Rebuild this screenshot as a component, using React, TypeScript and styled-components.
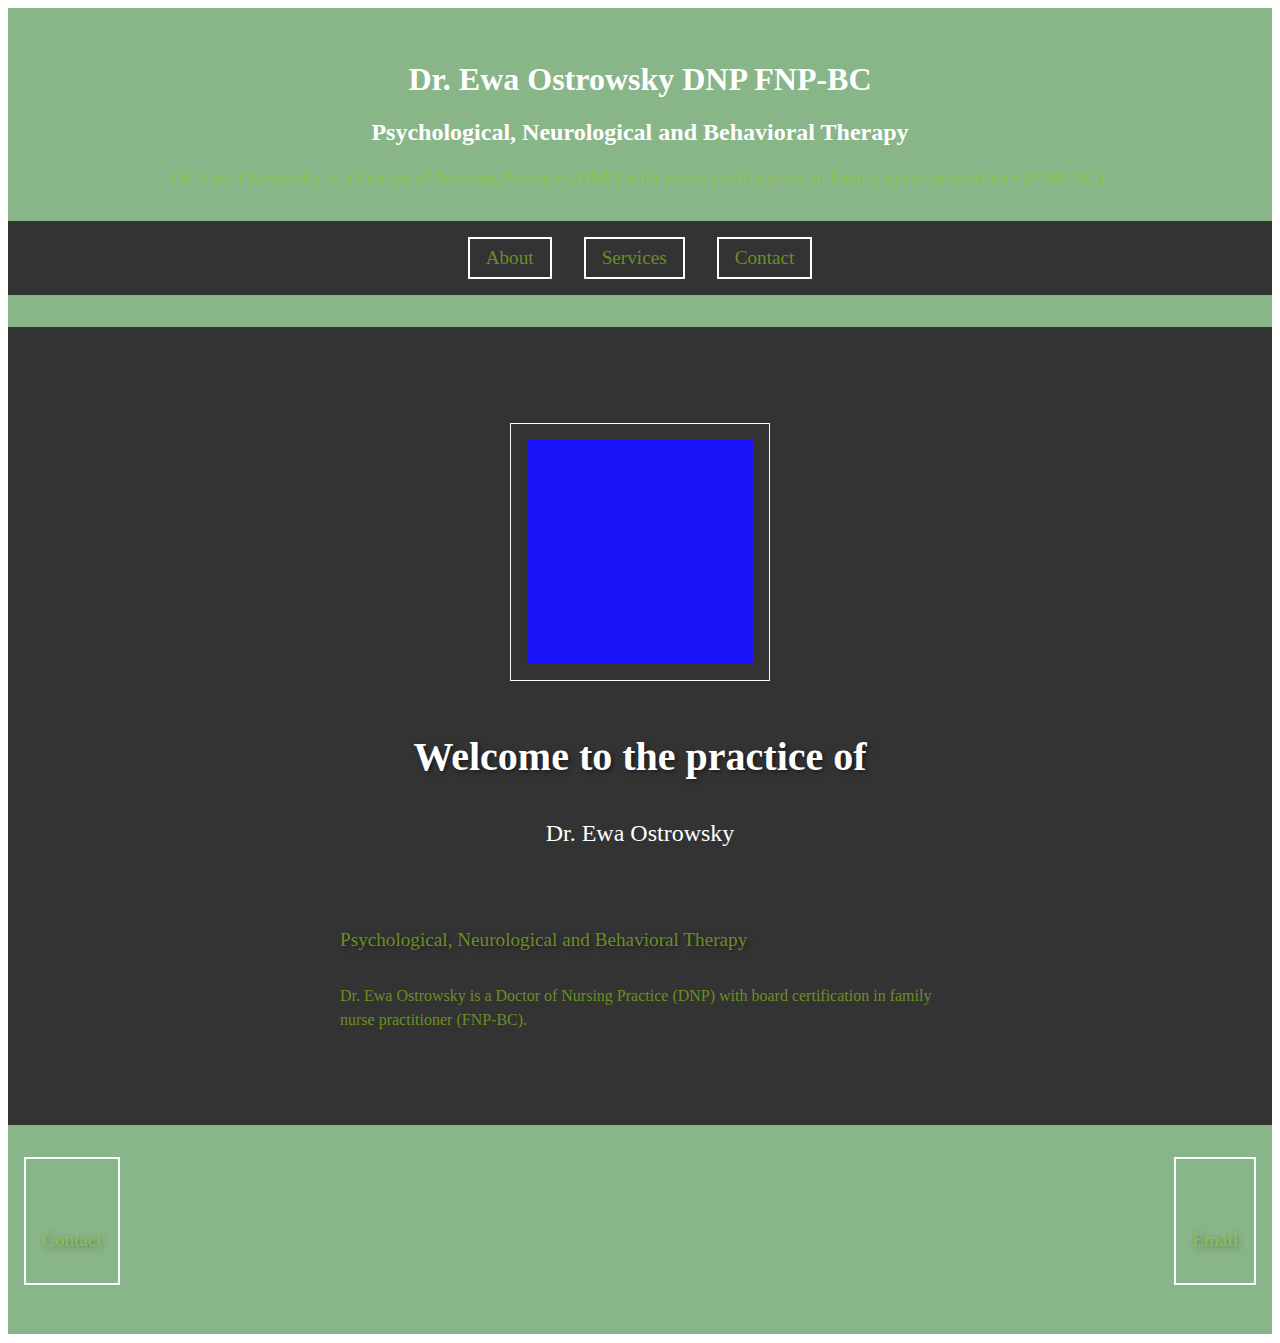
import React from 'react';
import styled, { createGlobalStyle } from 'styled-components';

const colors = {
  sage: '#89b689',
  dark: '#333333',
  olive: '#6b8e23',
  lime: '#8bc34a',
  white: '#ffffff',
  blue: '#1b13f7',
};

const GlobalStyle = createGlobalStyle`
  body {
    margin: 8px;
    font-family: "Liberation Serif", "Times New Roman", serif;
    background: #fff;
  }
`;

const Page = styled.div`
  background: ${colors.sage};
`;

const Header = styled.header`
  padding: 32px 0;
  text-align: center;
`;

const Title = styled.h1`
  margin: 21px 0;
  font-size: 32px;
  color: ${colors.white};
`;

const Subtitle = styled.h2`
  margin: 0;
  font-size: 24px;
  color: ${colors.white};
`;

const Intro = styled.p`
  margin: 21px 0 0;
  font-size: 19.2px;
  line-height: 22px;
  color: ${colors.lime};
`;

const Nav = styled.nav`
  background: ${colors.dark};
  padding: 16px;
  display: flex;
  justify-content: center;
  gap: 32px;
`;

const NavButton = styled.a`
  border: 2px solid ${colors.white};
  padding: 8px 16px;
  font-size: 19.2px;
  line-height: 22px;
  color: ${colors.olive};
  text-decoration: none;
`;

const Hero = styled.section`
  margin-top: 32px;
  background: ${colors.dark};
  padding: 96px 0 93px;
  display: flex;
  flex-direction: column;
  align-items: center;
`;

const Frame = styled.div`
  border: 1px solid ${colors.white};
  padding: 16px;
  margin-bottom: 53px;
`;

const Portrait = styled.div`
  width: 226px;
  height: 224px;
  background: ${colors.blue};
`;

const Welcome = styled.h1`
  margin: 0 0 39px;
  font-size: 40px;
  line-height: 46px;
  color: ${colors.white};
  text-shadow: 2px 2px 4px rgba(0, 0, 0, 0.5);
`;

const Name = styled.div`
  font-size: 24px;
  line-height: 28px;
  color: ${colors.white};
  margin-bottom: 82px;
`;

const About = styled.div`
  width: 600px;
`;

const AboutTitle = styled.h3`
  margin: 0 0 33px;
  font-size: 19.2px;
  line-height: 22px;
  font-weight: normal;
  color: ${colors.olive};
  text-shadow: 2px 2px 4px rgba(0, 0, 0, 0.4);
`;

const AboutText = styled.p`
  margin: 0;
  font-size: 16px;
  line-height: 24px;
  color: ${colors.olive};
`;

const Footer = styled.footer`
  padding: 32px 16px 49px;
  display: flex;
  justify-content: space-between;
`;

const FooterLink = styled.a`
  height: 128px;
  box-sizing: border-box;
  border: 2px solid ${colors.white};
  padding: 0 16px 32px;
  display: flex;
  align-items: flex-end;
  font-size: 19.2px;
  line-height: 22px;
  color: ${colors.lime};
  text-decoration: none;
  text-shadow: 2px 2px 6px rgba(0, 0, 0, 0.4);
`;

function App() {
  return (
    <>
      <GlobalStyle />
      <Page>
        <Header>
          <Title>Dr. Ewa Ostrowsky DNP FNP-BC</Title>
          <Subtitle>Psychological, Neurological and Behavioral Therapy</Subtitle>
          <Intro>
            Dr. Ewa Ostrowsky is a Doctor of Nursing Practice (DNP) with board
            certification in family nurse practitioner (FNP-BC).
          </Intro>
        </Header>
        <Nav>
          <NavButton>About</NavButton>
          <NavButton>Services</NavButton>
          <NavButton>Contact</NavButton>
        </Nav>
        <Hero>
          <Frame>
            <Portrait />
          </Frame>
          <Welcome>Welcome to the practice of</Welcome>
          <Name>Dr. Ewa Ostrowsky</Name>
          <About>
            <AboutTitle>Psychological, Neurological and Behavioral Therapy</AboutTitle>
            <AboutText>
              Dr. Ewa Ostrowsky is a Doctor of Nursing Practice (DNP) with board
              certification in family nurse practitioner (FNP-BC).
            </AboutText>
          </About>
        </Hero>
        <Footer>
          <FooterLink>Contact</FooterLink>
          <FooterLink>Email</FooterLink>
        </Footer>
      </Page>
    </>
  );
}

export default App;
